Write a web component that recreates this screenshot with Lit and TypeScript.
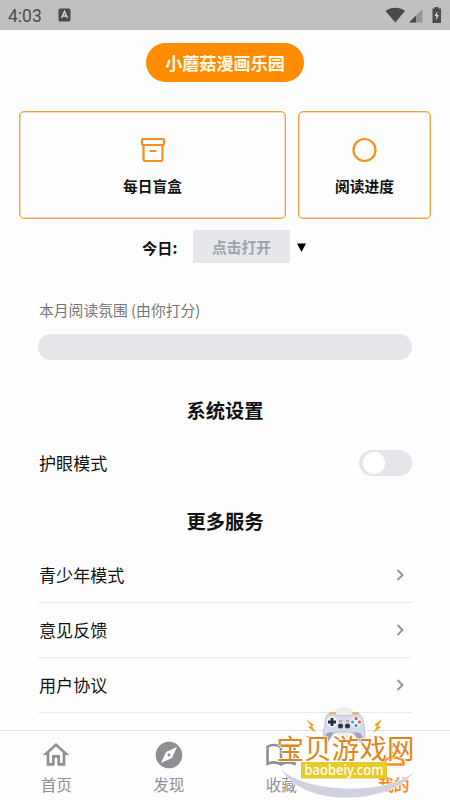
import { LitElement, html, css, svg } from "lit";
import { customElement } from "lit/decorators.js";

const homeIcon = svg`<path d="M12 5.69l5 4.5V18h-2v-6H9v6H7v-7.81l5-4.5M12 3L2 12h3v8h6v-6h2v6h6v-8h3L12 3z"/>`;
const compassIcon = svg`<path d="M12 10.9c-.61 0-1.1.49-1.1 1.1s.49 1.1 1.1 1.1c.61 0 1.1-.49 1.1-1.1s-.49-1.1-1.1-1.1zM12 2C6.48 2 2 6.48 2 12s4.48 10 10 10 10-4.48 10-10S17.52 2 12 2zm2.19 12.19L6 18l3.81-8.19L18 6l-3.81 8.19z"/>`;
const bookIcon = svg`<path fill="none" stroke="currentColor" stroke-width="1.9" d="M12 6.2C9.4 4 5 4 1.9 5.7V18.6C5 17.1 9.4 17.1 12 19.1C14.6 17.1 19 17.1 22.1 18.6V5.7C19 4 14.6 4 12 6.2ZM12 6.2V19"/>`;
const personIcon = svg`<path d="M12 5.9c1.160 0 2.100.94 2.100 2.100s-.94 2.100-2.100 2.100S9.900 9.160 9.900 8s.94-2.100 2.100-2.100m0 9c2.970 0 6.100 1.460 6.100 2.100v1.100H5.900V17c0-.64 3.130-2.100 6.100-2.100M12 4C9.790 4 8 5.790 8 8s1.790 4 4 4 4-1.790 4-4-1.790-4-4-4zm0 9c-2.670 0-8 1.340-8 4v3h16v-3c0-2.660-5.330-4-8-4z"/>`;

@customElement("app-root")
export class AppRoot extends LitElement {
  static styles = css`
    :host {
      display: flex;
      flex-direction: column;
      position: relative;
      width: 450px;
      height: 800px;
      overflow: hidden;
      background: #fefefe;
      color: #111;
      font-family: "Noto Sans CJK SC", "Noto Sans", sans-serif;
    }
    * { box-sizing: border-box; }
    svg { display: block; flex: none; }
    .status {
      height: 30px;
      flex: none;
      background: #c0c0c0;
      color: #4b4b4b;
      display: flex;
      align-items: center;
      padding: 0 6px 0 8px;
    }
    .time { font: 400 17.5px/30px Roboto, sans-serif; width: 50px; padding-top: 1px; }
    .grow { flex: 1; }
    .main { flex: 1; min-height: 0; overflow: hidden; }
    .title {
      width: 158px;
      height: 39px;
      margin: 13px auto 0;
      border-radius: 20px;
      background: #ff8c00;
      color: #fff8e8;
      font-size: 17.1px;
      font-weight: 700;
      line-height: 39px;
      text-align: center;
    }
    .cards { display: flex; gap: 12px; margin: 29px 19px 0; height: 108px; }
    .card {
      border: 1px solid #f0a040;
      box-shadow: inset 0 0 0 0.5px #f5b468;
      border-radius: 5px;
      display: flex;
      flex-direction: column;
      align-items: center;
      padding-top: 23px;
      color: #f5901e;
    }
    .wide { width: 267px; }
    .narrow { width: 133px; }
    .label { color: #111; font-size: 14.7px; font-weight: 700; line-height: 22px; margin-top: 10px; }
    .today { display: flex; align-items: center; margin: 11px 0 0 142px; height: 33px; font-size: 15.2px; font-weight: 700; }
    .day { width: 51px; }
    .open { width: 97px; height: 33px; line-height: 34px; background: #e5e7eb; color: #9ca3af; text-align: center; font-size: 14.7px; font-weight: 700; }
    .caret { margin-left: 7px; margin-top: 1px; }
    .mood { margin: 35px 0 0 39px; font-size: 14.8px; line-height: 24px; color: #757575; }
    .bar { margin: 12px 38px 0; height: 26px; border-radius: 13px; background: #e5e6ea; }
    .heading { text-align: center; font-size: 19.3px; line-height: 30px; font-weight: 700; }
    .system { margin-top: 35px; }
    .row { display: flex; align-items: center; justify-content: space-between; margin: 0 38px; height: 55px; font-size: 17.1px; }
    .row span { padding-left: 1px; }
    .eye { height: 30px; margin-top: 23px; }
    .eye span { margin-top: -1px; }
    .switch { width: 53px; height: 26px; border-radius: 13px; background: #e5e6ea; padding: 2px 3.5px; }
    .knob { width: 22px; height: 22px; border-radius: 50%; background: #fff; }
    .services { margin-top: 28px; }
    .list { margin-top: 12px; }
    .item { border-bottom: 1px solid #eaeaeb; }
    .item span { margin-top: -1px; }
    .item svg { margin-right: 6px; }
    .tabs { height: 70px; flex: none; border-top: 1px solid #e2e2e2; display: flex; background: #fefefe; }
    .tab { flex: 1; display: flex; flex-direction: column; align-items: center; padding-top: 8px; color: #8e8e93; font-size: 15.6px; line-height: 22px; }
    .tab span { margin-top: 2px; }
    .active { color: #ff8c1a; font-weight: 700; }
    .mark { position: absolute; left: 270px; top: 700px; }
    .brand { font-family: "Noto Sans CJK SC", sans-serif; font-size: 27.5px; }
    .site { font-family: "Noto Sans", sans-serif; font-size: 13.8px; font-weight: 500; }
  `;

  private tab(icon: unknown, name: string, active = false) {
    return html`<div class="tab ${active ? "active" : ""}">
      <svg width="32" height="32" viewBox="0 0 24 24" fill="currentColor">${icon}</svg>
      <span>${name}</span>
    </div>`;
  }

  render() {
    return html`
      <div class="status">
        <div class="time">4:03</div>
        <svg width="13" height="14" viewBox="0 0 13 14"><rect x=".5" y=".5" width="12" height="13" rx="1.5" fill="#4b4b4b"/><path d="M3.5 10L6.5 3.5L9.5 10M4.5 8H8.5" fill="none" stroke="#d8d8d8" stroke-width="1.4"/></svg>
        <div class="grow"></div>
        <svg width="60" height="18" viewBox="0 0 60 18">
          <path d="M1.5 5C7 .7 15.5 .7 21 5L11.3 16.5Z" fill="#4b4b4b"/>
          <path d="M38.5 3V16.5H25Z" fill="#969696"/><path d="M32 9.5V16.5H25Z" fill="#4b4b4b"/>
          <path d="M50.5 1H54.5V2.5H57V17H48.5V2.5H50.5Z" fill="#4b4b4b"/>
          <path d="M53.5 5L50.5 10H52.5L51.8 14.5L55 9H53Z" fill="#ddd"/>
        </svg>
      </div>
      <div class="main">
        <div class="title">小蘑菇漫画乐园</div>
        <div class="cards">
          <div class="card wide">
            <svg width="30" height="30" viewBox="0 0 30 30" fill="none" stroke="currentColor" stroke-width="2.2" stroke-linejoin="round" stroke-linecap="round"><rect x="4" y="4" width="22" height="6" rx="1"/><path d="M5.5 10V24Q5.5 26 7 26H23Q24.5 26 24.5 24V10M12.5 16H17.5"/></svg>
            <div class="label">每日盲盒</div>
          </div>
          <div class="card narrow">
            <svg width="30" height="30" viewBox="0 0 30 30" fill="none" stroke="currentColor" stroke-width="2.2"><circle cx="14.500" cy="15" r="11"/></svg>
            <div class="label">阅读进度</div>
          </div>
        </div>
        <div class="today">
          <div class="day">今日:</div>
          <div class="open">点击打开</div>
          <svg class="caret" width="9" height="9"><path d="M0 .5H9L4.5 9Z" fill="#000"/></svg>
        </div>
        <div class="mood">本月阅读氛围 (由你打分)</div>
        <div class="bar"></div>
        <div class="heading system">系统设置</div>
        <div class="row eye"><span>护眼模式</span><div class="switch"><div class="knob"></div></div></div>
        <div class="heading services">更多服务</div>
        <div class="list">
          ${["青少年模式", "意见反馈", "用户协议"].map(
            (name) => html`<div class="row item"><span>${name}</span>
              <svg width="12" height="12" viewBox="0 0 12 12"><path d="M3.5 1L8.5 6L3.5 11" fill="none" stroke="#969696" stroke-width="2"/></svg></div>`
          )}
        </div>
      </div>
      <div class="tabs">
        ${this.tab(homeIcon, "首页")} ${this.tab(compassIcon, "发现")}
        ${this.tab(bookIcon, "收藏")} ${this.tab(personIcon, "我的", true)}
      </div>
      <svg class="mark" width="150" height="100" viewBox="0 0 150 100">
        <circle cx="74" cy="22" r="14.500" fill="#ededed"/>
        <path d="M10 68C32 92 116 97 145 71C124 103 36 112 10 68Z" fill="#d0d1df" stroke="#fff" stroke-width=".6"/>
        <path d="M61 14Q74 18 86 14C92 13 93 19 94 25C95 33 96 43 92 43C87 42 86 33 80 32H67C61 33 60 42 56 43C52 43 53 32 55 25C55 18 56 13 61 14Z" fill="#d9dae7" stroke="#aeb0c6" stroke-width=".7"/>
        <path d="M57 33C53 38 54 43 57 42C60 40 61 35 64 32ZM90 33C94 38 94 43 91 42C87 40 86 35 83 32Z" fill="#9ea1b9"/>
        <circle cx="62" cy="22" r="5.5" fill="#eef0fa"/><circle cx="86" cy="22" r="5.5" fill="#eef0fa"/>
        <path d="M62 18V26M58 22H66" stroke="#27303d" stroke-width="2.8"/>
        <circle cx="86" cy="18.5" r="1.5" fill="#e44"/><circle cx="82.5" cy="22" r="1.5" fill="#39a6db"/><circle cx="89.5" cy="22" r="1.5" fill="#e44"/><circle cx="86" cy="25.5" r="1.5" fill="#2ba39b"/>
        <circle cx="70.5" cy="26" r="2.5" fill="#253848"/><circle cx="77.5" cy="26" r="2.5" fill="#253848"/>
        <path d="M69 21H72M76 21H79" stroke="#d64d6d" stroke-width="1"/>
        <path d="M60 14.5V13H66M82 13H88V14.5" fill="none" stroke="#e6ad2e" stroke-width="1.3"/>
        <path d="M36 19L44 25L42 26L46 33L38 27L41 26ZM112 19L104 25L107 26L103 33L111 27L108 26ZM35 36L43 39L40 36ZM112 36L105 39L108 36Z" fill="#eba51e"/>
        <text class="brand" x="75.5" y="58.5" text-anchor="middle" textLength="138" fill="#df851c" stroke="#fff" stroke-width="1.4" paint-order="stroke">宝贝游戏网</text>
        <rect x="31" y="62" width="86" height="16.5" fill="#e8ca2b"/>
        <text class="site" x="74" y="75" text-anchor="middle" textLength="79" lengthAdjust="spacingAndGlyphs" fill="#fff">baobeiy.com</text>
      </svg>
    `;
  }
}
